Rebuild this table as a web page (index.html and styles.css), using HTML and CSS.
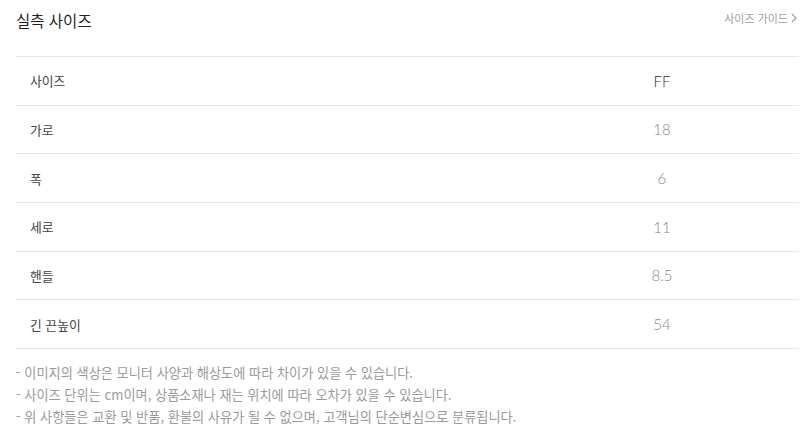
FILE: index.html
```html
<!DOCTYPE html>
<html lang="ko">
<head>
<meta charset="utf-8">
<link rel="stylesheet" href="styles.css">
</head>
<body>
<div class="wrap">
  <div class="head">
    <h2 class="title">실측 사이즈</h2>
    <a class="guide">사이즈 가이드<svg class="chev" width="6" height="10" viewBox="0 0 6 10"><path d="M1 1 L5 5 L1 9" fill="none" stroke="#9a9a9a" stroke-width="1.1"/></svg></a>
  </div>
  <div class="table">
    <div class="row"><div class="label">사이즈</div><div class="val dark">FF</div></div>
    <div class="row"><div class="label">가로</div><div class="val">18</div></div>
    <div class="row"><div class="label">폭</div><div class="val">6</div></div>
    <div class="row"><div class="label">세로</div><div class="val">11</div></div>
    <div class="row"><div class="label">핸들</div><div class="val">8.5</div></div>
    <div class="row"><div class="label">긴 끈높이</div><div class="val">54</div></div>
  </div>
  <ul class="notes">
    <li>- 이미지의 색상은 모니터 사양과 해상도에 따라 차이가 있을 수 있습니다.</li>
    <li>- 사이즈 단위는 cm이며, 상품소재나 재는 위치에 따라 오차가 있을 수 있습니다.</li>
    <li>- 위 사항들은 교환 및 반품, 환불의 사유가 될 수 없으며, 고객님의 단순변심으로 분류됩니다.</li>
  </ul>
</div>
</body>
</html>
```
FILE: styles.css
```css
* { box-sizing: border-box; }
body {
  margin: 0;
  background: #fff;
  font-family: "Noto Sans CJK KR", "Noto Sans", sans-serif;
  color: #333;
}
.wrap {
  padding: 0 12px 0 16px;
}
.head {
  height: 40px;
  display: flex;
  align-items: center;
  justify-content: space-between;
  margin-bottom: 16px;
}
.title {
  margin: 0;
  font-size: 15.5px;
  font-weight: 400;
  color: #1f1f1f;
  line-height: 20px;
}
.guide {
  display: flex;
  align-items: center;
  gap: 3px;
  font-size: 11px;
  color: #a0a0a0;
  margin-right: 2px;
  margin-top: -4px;
}
.table {
  border-bottom: 1px solid #e6e6e6;
}
.row {
  display: flex;
  height: 48.67px;
  border-top: 1px solid #e6e6e6;
  align-items: center;
}
.label {
  width: 65%;
  padding-left: 14px;
  font-size: 12.8px;
  color: #444;
}
.val {
  width: 35%;
  text-align: center;
  font-family: "Lato", "Noto Sans", sans-serif;
  font-weight: 300;
  font-size: 15px;
  color: #888;
}
.val.dark {
  color: #333;
}
.notes {
  list-style: none;
  margin: 13px 0 0;
  padding: 0;
  font-size: 13.2px;
  line-height: 22px;
  color: #9a9a9a;
}
```
